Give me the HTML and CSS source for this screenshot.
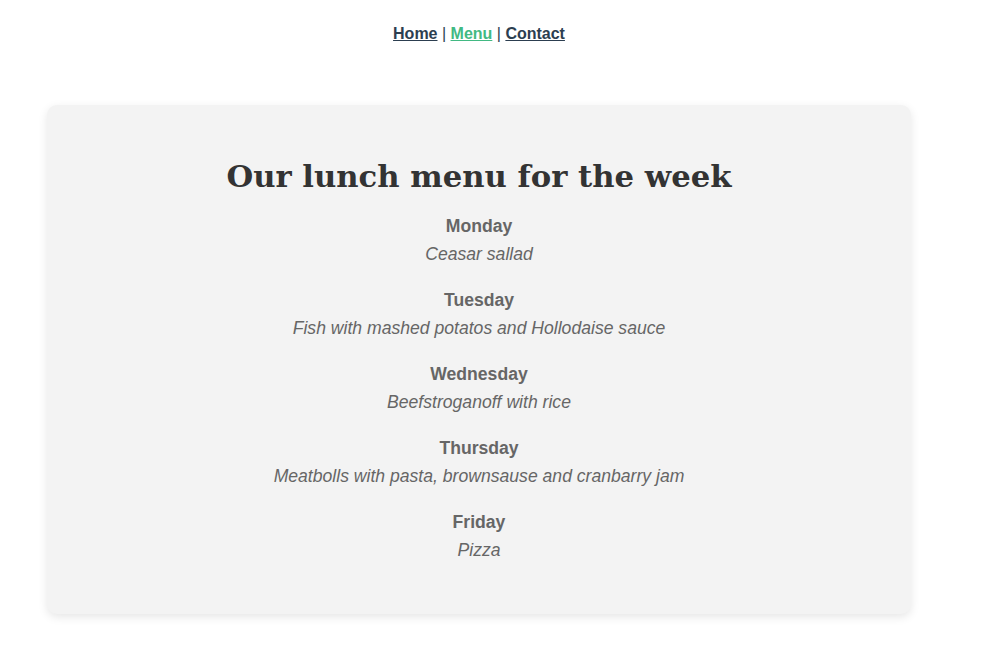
FILE: index.html
```html
<!DOCTYPE html>
<html lang="en">
<head>
<meta charset="utf-8">
<title>Lunch menu</title>
<link rel="stylesheet" href="styles.css">
</head>
<body>
<div class="app">
  <nav class="nav">
    <a href="#" class="nav-link">Home</a> | <a href="#" class="nav-link active">Menu</a> | <a href="#" class="nav-link">Contact</a>
  </nav>
  <main class="card">
    <h1 class="title">Our lunch menu for the week</h1>
    <div class="day">
      <h3 class="day-name">Monday</h3>
      <p class="dish">Ceasar sallad</p>
    </div>
    <div class="day">
      <h3 class="day-name">Tuesday</h3>
      <p class="dish">Fish with mashed potatos and Hollodaise sauce</p>
    </div>
    <div class="day">
      <h3 class="day-name">Wednesday</h3>
      <p class="dish">Beefstroganoff with rice</p>
    </div>
    <div class="day">
      <h3 class="day-name">Thursday</h3>
      <p class="dish">Meatbolls with pasta, brownsause and cranbarry jam</p>
    </div>
    <div class="day">
      <h3 class="day-name">Friday</h3>
      <p class="dish">Pizza</p>
    </div>
  </main>
</div>
</body>
</html>
```
FILE: styles.css
```css
html, body {
  margin: 0;
  padding: 0;
  background: #ffffff;
}

.app {
  width: 958px;
  padding-bottom: 40px;
  font-family: "Liberation Sans", Arial, sans-serif;
  color: #2c3e50;
  text-align: center;
}

.nav {
  padding: 25px 0 0;
  height: 81px;
  box-sizing: border-box;
  font-size: 16px;
  font-weight: normal;
  line-height: 18px;
}

.nav-link {
  color: #2c3e50;
  font-weight: bold;
  text-decoration: underline;
}

.nav-link.active {
  color: #42b983;
}

.card {
  margin: 24px 47px 0;
  background: #f3f3f3;
  border-radius: 10px;
  box-shadow: 0 3px 10px rgba(0, 0, 0, 0.1);
  padding: 52px 0 32px;
  display: flex;
  flex-direction: column;
  align-items: center;
}

.title {
  margin: 0 0 17px;
  font-family: "DejaVu Serif", Georgia, serif;
  font-size: 30.7px;
  line-height: 38px;
  color: #333333;
  font-weight: bold;
}

.day {
  margin-bottom: 18px;
}

.day-name {
  margin: 0;
  font-size: 17.6px;
  line-height: 28px;
  color: #666666;
  font-weight: bold;
}

.dish {
  margin: 0;
  font-size: 17.6px;
  line-height: 28px;
  color: #666666;
  font-style: italic;
}
```
